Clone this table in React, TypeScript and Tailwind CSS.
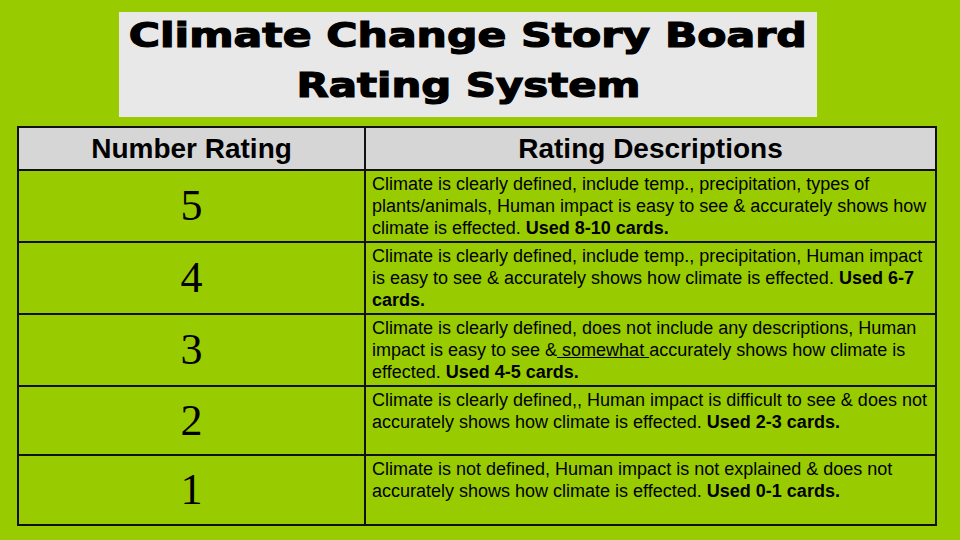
const rows = [
  {
    n: "5",
    h: "h-[72px]",
    body: (
      <>
        Climate is clearly defined, include temp., precipitation, types of plants/animals, Human impact is easy
        to see &amp; accurately shows how climate is effected. <b>Used 8-10 cards.</b>
      </>
    ),
  },
  {
    n: "4",
    h: "h-[72px]",
    body: (
      <>
        Climate is clearly defined, include temp., precipitation, Human impact is easy to see &amp; accurately
        shows how climate is effected. <b>Used 6-7 cards.</b>
      </>
    ),
  },
  {
    n: "3",
    h: "h-[72px]",
    body: (
      <>
        Climate is clearly defined, does not include any descriptions, Human impact is easy to see &amp;
        <span className="underline"> somewhat </span>accurately shows how climate is effected.{" "}
        <b>Used 4-5 cards.</b>
      </>
    ),
  },
  {
    n: "2",
    h: "h-[69px]",
    body: (
      <>
        Climate is clearly defined,, Human impact is difficult to see &amp; does not accurately shows how climate
        is effected. <b>Used 2-3 cards.</b>
      </>
    ),
  },
  {
    n: "1",
    h: "h-[68px]",
    body: (
      <>
        Climate is not defined, Human impact is not explained &amp; does not accurately shows how climate is
        effected. <b>Used 0-1 cards.</b>
      </>
    ),
  },
];

export default function App() {
  return (
    <div className="flex h-[540px] w-[960px] flex-col bg-[#99cc00] font-['Liberation_Sans',Arial,sans-serif] text-black">
      {/* title */}
      <div className="mx-[119px] mt-[12px] flex h-[105px] w-[698px] flex-col items-center bg-[#e8e8e8] font-['DejaVu_Sans',sans-serif] text-[33px] font-bold leading-[50px] [-webkit-text-stroke:1.2px_black]">
        <div className="-mt-[1px] scale-x-129 whitespace-nowrap">Climate Change Story Board</div>
        <div className="scale-x-127 whitespace-nowrap">Rating System</div>
      </div>

      {/* table */}
      <div className="ml-[17px] mt-[9px] w-[920px] border-2 border-[#111]">
        <div className="grid h-[43px] grid-cols-[347px_1fr] border-b-2 border-[#111] bg-[#d6d6d6] text-[28px] font-bold">
          <div className="flex items-center justify-center border-r-2 border-[#111]">Number Rating</div>
          <div className="flex items-center justify-center">Rating Descriptions</div>
        </div>
        {rows.map((r, i) => (
          <div
            key={r.n}
            className={`grid grid-cols-[347px_1fr] ${r.h} ${i < rows.length - 1 ? "border-b-2 border-[#111]" : ""}`}
          >
            <div className="flex items-center justify-center border-r-2 border-[#111] font-['Liberation_Serif',serif] text-[44px] leading-none">
              {r.n}
            </div>
            <div className="px-[6px] pt-[2px] text-[18px] leading-[22px]">{r.body}</div>
          </div>
        ))}
      </div>
    </div>
  );
}
